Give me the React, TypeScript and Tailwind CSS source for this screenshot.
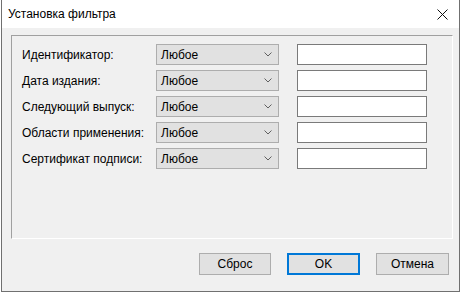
const ROWS = [
  'Идентификатор:',
  'Дата издания:',
  'Следующий выпуск:',
  'Области применения:',
  'Сертификат подписи:',
]

export default function App() {
  return (
    <div className="w-[463px] h-[294px] bg-white font-['Liberation_Sans',sans-serif] text-[12px] text-black">
      <div className="ml-[1px] w-[459px] h-[292px] border-x border-b border-[#707070] bg-[#f0f0f0] flex flex-col">
        {/* Title bar */}
        <div className="h-[28px] bg-white flex items-center justify-between pl-[6px] pr-[10px] shrink-0">
          <span className="text-[12px] leading-none">Установка фильтра</span>
          <svg width="11" height="11" viewBox="0 0 11 11" className="mr-[1px]">
            <path d="M0.5 0.5L10.5 10.5M10.5 0.5L0.5 10.5" stroke="#111" strokeWidth="1" fill="none" />
          </svg>
        </div>

        {/* Group box */}
        <div className="ml-[9px] mt-[7px] w-[442px] h-[204px] border-t border-l border-[#a0a0a0] border-b border-r border-b-white border-r-white">
          <div className="pt-[8px] flex flex-col gap-[5px]">
            {ROWS.map((label) => (
              <div key={label} className="h-[21px] flex items-center">
                <span className="w-[144px] pl-[10px] shrink-0">{label}</span>
                <div className="w-[123px] h-[21px] border border-[#adadad] bg-[#e1e1e1] flex items-center justify-between pl-[4px] pr-[6px]">
                  <span>Любое</span>
                  <svg width="8" height="5" viewBox="0 0 8 5">
                    <path d="M0.5 0.5L4 4L7.5 0.5" stroke="#606060" strokeWidth="1" fill="none" />
                  </svg>
                </div>
                <div className="ml-[18px] w-[130px] h-[21px] border border-[#7a7a7a] bg-white" />
              </div>
            ))}
          </div>
        </div>

        {/* Buttons */}
        <div className="mt-[14px] flex pl-[197px] gap-[16px]">
          <button className="w-[72px] h-[22px] border border-[#adadad] bg-[#e1e1e1]">Сброс</button>
          <button className="w-[73px] h-[22px] border-2 border-[#0078d7] bg-[#e1e1e1]">OK</button>
          <button className="w-[73px] h-[22px] border border-[#adadad] bg-[#e1e1e1]">Отмена</button>
        </div>
      </div>
    </div>
  )
}
